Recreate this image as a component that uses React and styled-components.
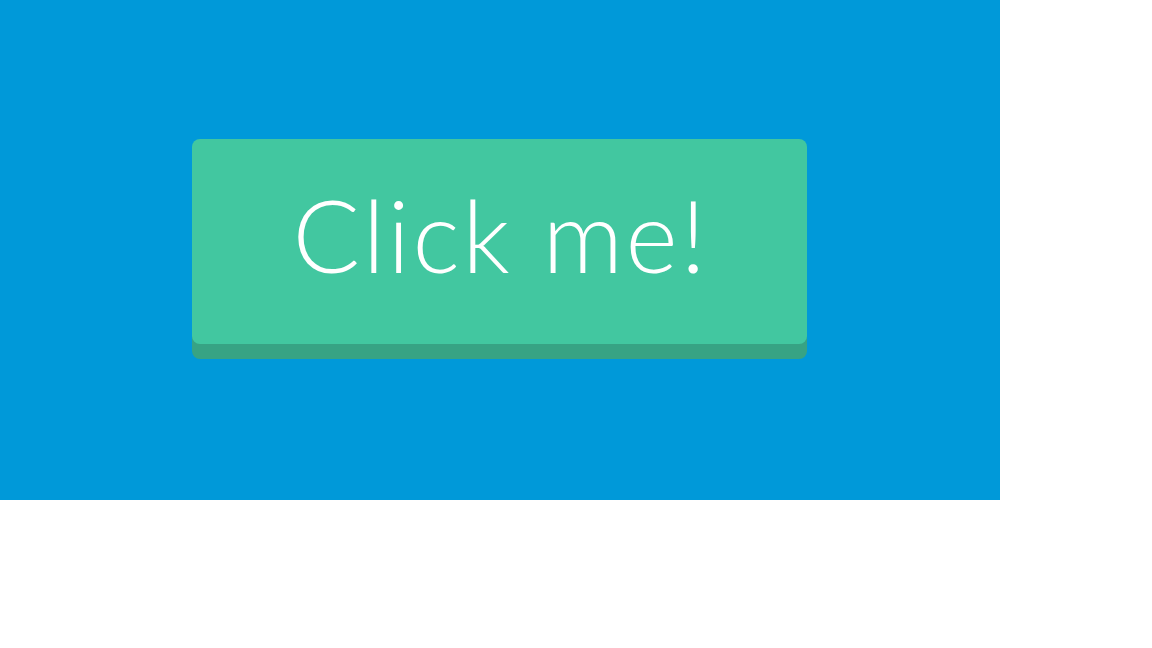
import styled, { createGlobalStyle } from "styled-components";

const GlobalStyle = createGlobalStyle`
  html, body {
    margin: 0;
    padding: 0;
    background: #ffffff;
  }
`;

const Stage = styled.div`
  width: 1000px;
  height: 500px;
  background: #0099d9;
  display: flex;
  align-items: center;
  justify-content: center;
`;

const Button = styled.button`
  width: 615px;
  height: 205px;
  margin: 0 1px 18px 0;
  border: none;
  border-radius: 8px;
  background: #42c7a0;
  box-shadow: 0 15px 0 #37a384;
  color: #ffffff;
  font-family: "Lato", "Open Sans", sans-serif;
  font-weight: 300;
  font-size: 100px;
  letter-spacing: 2.7px;
  line-height: 1;
  padding: 0 0 15px 2px;
  cursor: pointer;
  display: flex;
  align-items: center;
  justify-content: center;
`;

export default function App() {
  return (
    <>
      <GlobalStyle />
      <Stage>
        <Button>Click me!</Button>
      </Stage>
    </>
  );
}
